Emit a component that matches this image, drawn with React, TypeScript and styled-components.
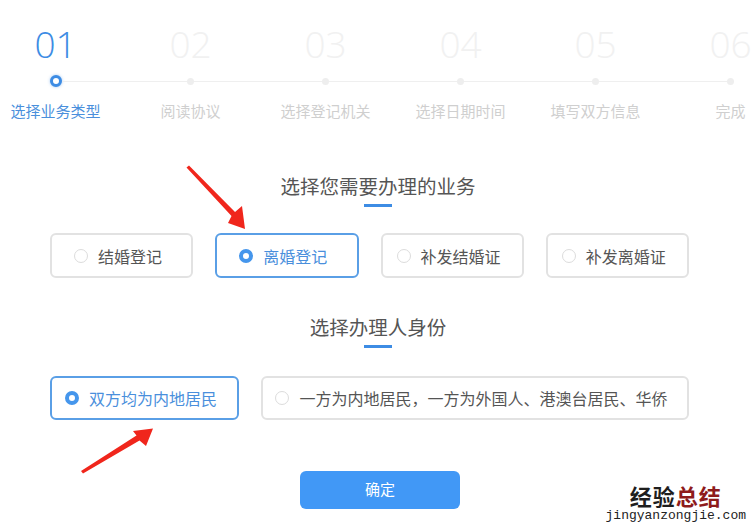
import React from "react";
import styled, { createGlobalStyle } from "styled-components";

const Global = createGlobalStyle`
  html, body { margin: 0; padding: 0; background: #fff; }
  * { box-sizing: border-box; }
`;

const CJK = `"Noto Sans CJK SC", "Noto Sans", sans-serif`;
const BLUE = "#4596ec";

const Page = styled.div`
  position: relative;
  width: 756px;
  height: 531px;
  overflow: hidden;
  background: #fff;
  font-family: ${CJK};
  padding-top: 22px;
`;

const Stepper = styled.div`
  display: grid;
  grid-template-columns: repeat(6, 135px);
  margin-left: -12px;
`;

const Step = styled.div`
  display: flex;
  flex-direction: column;
  align-items: center;
`;

const Num = styled.div<{ $active?: boolean }>`
  font-family: "Open Sans", "Noto Sans", sans-serif;
  font-weight: 300;
  font-size: 37px;
  line-height: 44px;
  color: ${(p) => (p.$active ? "#3d8ce4" : "#f1f1f1")};
`;

const DotRow = styled.div`
  margin-top: 9px;
  height: 12px;
  width: 100%;
  display: flex;
  align-items: center;
`;

const Seg = styled.div<{ $show: boolean }>`
  flex: 1;
  height: 1px;
  background: ${(p) => (p.$show ? "#efefef" : "transparent")};
`;

const Dot = styled.div<{ $active?: boolean }>`
  width: ${(p) => (p.$active ? 12 : 7)}px;
  height: ${(p) => (p.$active ? 12 : 7)}px;
  border-radius: 50%;
  background: ${(p) => (p.$active ? "#fff" : "#eeeeee")};
  border: ${(p) => (p.$active ? `3px solid #3d8ce4` : "none")};
  box-shadow: ${(p) => (p.$active ? "0 0 3px rgba(61,140,228,0.5)" : "none")};
`;

const StepLabel = styled.div<{ $active?: boolean }>`
  margin-top: 14px;
  font-size: 15px;
  line-height: 20px;
  white-space: nowrap;
  color: ${(p) => (p.$active ? "#4a8fdc" : "#cfcfcf")};
`;

const TitleBlock = styled.div<{ $mt: number }>`
  margin-top: ${(p) => p.$mt}px;
  display: flex;
  flex-direction: column;
  align-items: center;
`;

const Title = styled.div`
  font-size: 19.5px;
  line-height: 28px;
  color: #555;
`;

const Underline = styled.div`
  margin-top: 4px;
  width: 28px;
  height: 3px;
  background: #3d8ce4;
`;

const OptionRow = styled.div<{ $cols: string; $mt: number }>`
  margin-top: ${(p) => p.$mt}px;
  margin-left: 50px;
  width: 639px;
  display: grid;
  grid-template-columns: ${(p) => p.$cols};
  column-gap: 22px;
`;

const Option = styled.div<{ $selected?: boolean; $h: number }>`
  height: ${(p) => p.$h}px;
  border: 2px solid ${(p) => (p.$selected ? "#5a9fe6" : "#e2e2e2")};
  border-radius: 6px;
  display: flex;
  align-items: center;
  justify-content: center;
  gap: 10px;
  padding-right: 7px;
  font-size: 16px;
  white-space: nowrap;
  color: ${(p) => (p.$selected ? "#4a8fdc" : "#555")};
`;

const Radio = styled.span<{ $on?: boolean }>`
  flex: none;
  width: 14px;
  height: 14px;
  border-radius: 50%;
  border: ${(p) => (p.$on ? `4px solid ${BLUE}` : "1px solid #dcdcdc")};
  background: #fff;
`;

const Confirm = styled.button`
  display: flex;
  align-items: center;
  justify-content: center;
  margin: 51px 0 0 300px;
  padding: 0 0 3px;
  width: 160px;
  height: 38px;
  border: none;
  border-radius: 6px;
  background: #4198f6;
  color: #fff;
  font-family: ${CJK};
  font-size: 15px;
  line-height: 20px;
`;

const Watermark = styled.div`
  position: absolute;
  right: 10px;
  bottom: 9px;
  display: flex;
  flex-direction: column;
  align-items: center;
`;

const WmTitle = styled.div`
  font-family: ${CJK};
  font-weight: 700;
  font-size: 22px;
  line-height: 21px;
  letter-spacing: 1px;
  color: #1e1e1e;
`;

const WmRed = styled.span`
  color: #8e1b1b;
`;

const WmDomain = styled.div`
  font-family: "Liberation Mono", "DejaVu Sans Mono", monospace;
  font-size: 13px;
  line-height: 13px;
  color: #222;
  margin-top: 3px;
`;

const Overlay = styled.svg`
  position: absolute;
  left: 0;
  top: 0;
  pointer-events: none;
`;

const steps = [
  ["01", "选择业务类型"],
  ["02", "阅读协议"],
  ["03", "选择登记机关"],
  ["04", "选择日期时间"],
  ["05", "填写双方信息"],
  ["06", "完成"],
];

const biz = ["结婚登记", "离婚登记", "补发结婚证", "补发离婚证"];

export default function App() {
  return (
    <Page>
      <Global />
      <Stepper>
        {steps.map(([n, l], i) => (
          <Step key={n}>
            <Num $active={i === 0}>{n}</Num>
            <DotRow>
              <Seg $show={i > 0} />
              <Dot $active={i === 0} />
              <Seg $show={i < steps.length - 1} />
            </DotRow>
            <StepLabel $active={i === 0}>{l}</StepLabel>
          </Step>
        ))}
      </Stepper>

      <TitleBlock $mt={51}>
        <Title>选择您需要办理的业务</Title>
        <Underline />
      </TitleBlock>
      <OptionRow $cols="repeat(4, 1fr)" $mt={26}>
        {biz.map((b, i) => (
          <Option key={b} $selected={i === 1} $h={45}>
            <Radio $on={i === 1} />
            {b}
          </Option>
        ))}
      </OptionRow>

      <TitleBlock $mt={35}>
        <Title>选择办理人身份</Title>
        <Underline />
      </TitleBlock>
      <OptionRow $cols="189px 428px" $mt={28}>
        <Option $selected $h={44}>
          <Radio $on />
          双方均为内地居民
        </Option>
        <Option $h={44}>
          <Radio />
          一方为内地居民，一方为外国人、港澳台居民、华侨
        </Option>
      </OptionRow>

      <Confirm>确定</Confirm>

      <Overlay width="756" height="531" viewBox="0 0 756 531">
        <polygon
          points="186.5,167.5 189,165.5 235,212 242,206 245,229 228,223 231.5,216"
          fill="#f0261c"
        />
        <polygon
          points="81,471 83,473.5 139.5,440.5 146,446 153,428.5 133,431 136.5,435.5"
          fill="#f0261c"
        />
      </Overlay>

      <Watermark>
        <WmTitle>
          经验<WmRed>总结</WmRed>
        </WmTitle>
        <WmDomain>jingyanzongjie.com</WmDomain>
      </Watermark>
    </Page>
  );
}
